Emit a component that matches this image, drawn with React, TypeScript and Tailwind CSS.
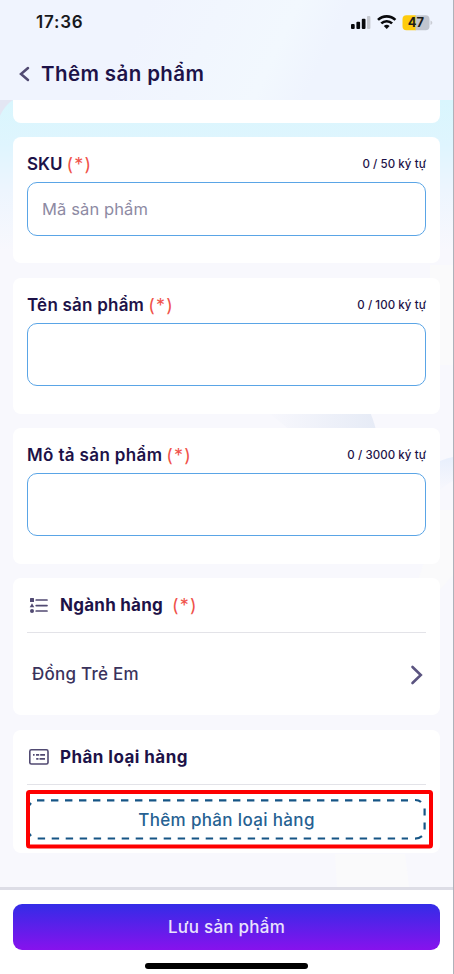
import React from 'react';

interface FieldCardProps {
  label: string;
  counter: string;
  placeholder?: string;
  cardClass: string;
  inputClass: string;
  labelClass?: string;
}

const Required = ({ className = '' }: { className?: string }) => (
  <span className={`text-[18px] leading-5 font-normal tracking-[1.2px] text-[#f0524a] ${className}`}>(*)</span>
);

const FieldCard: React.FC<FieldCardProps> = ({
  label,
  counter,
  placeholder,
  cardClass,
  inputClass,
  labelClass = '',
}) => (
  <section className={`rounded-lg bg-white px-3.5 pt-[18px] ${cardClass}`}>
    <div className="flex h-5 items-center justify-between whitespace-nowrap">
      <label className="flex items-center gap-1 text-[17px] font-semibold">
        <span className={labelClass}>{label}</span>
        <Required />
      </label>
      <span className="text-[11.5px] font-medium tracking-[0.07px]">{counter}</span>
    </div>
    <input
      placeholder={placeholder}
      className={`mt-[7px] block w-full rounded-[10px] border-[1.5px] border-[#5aa5e6] bg-white px-3.5 text-[16.5px] tracking-[0.12px] outline-none placeholder:text-[#8d8aa3] ${inputClass}`}
    />
  </section>
);

const StatusBar = () => (
  <div className="flex h-[45px] items-center justify-between pr-5 pl-9">
    <span className="pt-px text-[17px] font-semibold tracking-[0.8px] text-[#17181c]">17:36</span>
    <svg width="83" height="18" viewBox="0 0 83 18">
      <g fill="#08090c">
        <rect x="1" y="10" width="3.7" height="5" rx="1" />
        <rect x="6.4" y="7.8" width="3.7" height="7.2" rx="1" />
        <rect x="11.8" y="4.8" width="3.7" height="10.2" rx="1" />
        <rect x="17" y="2" width="3.4" height="13" rx="1" fill="#c5c8cf" />
      </g>
      <g fill="none" stroke="#08090c" strokeWidth="2.6">
        <path d="M28 5.9a12.4 12.4 0 0 1 17.4 0" />
        <path d="M31.3 9.4a7.7 7.7 0 0 1 10.8 0" />
      </g>
      <path d="M33.8 12.1a4.2 4.2 0 0 1 5.8 0l-2.9 2.9z" fill="#08090c" />
      <path d="M56.5 1.2H66v15h-9.5a4 4 0 0 1-4-4v-7a4 4 0 0 1 4-4z" fill="#fecb0c" />
      <path d="M65.5 1.2h10a4 4 0 0 1 4 4v7a4 4 0 0 1-4 4h-10z" fill="#c1c5cf" />
      <path d="M80.5 6.5c2.4.8 2.4 3.7 0 4.5z" fill="#c9ccd4" />
      <text x="66" y="13.2" textAnchor="middle" fontSize="13" fontWeight="700" fill="#1d1d1b">
        47
      </text>
    </svg>
  </div>
);

const ListIcon = () => (
  <svg width="19" height="17" viewBox="0 0 19 17" fill="#514a72">
    <rect x="1" y="1" width="4" height="4" rx="0.5" />
    <path d="M3 6.2l2.3 4H0.7z" />
    <circle cx="3" cy="14" r="2" />
    <path d="M7.2 3h10.8M7.2 8.6h10.8M7.2 14h10.8" stroke="#514a72" strokeWidth="1.7" strokeLinecap="round" />
  </svg>
);

const CardListIcon = () => (
  <svg width="20" height="16" viewBox="0 0 20 16" fill="none" stroke="#514a72">
    <rect x="0.8" y="0.8" width="18.2" height="14.2" rx="1.6" strokeWidth="1.6" />
    <path d="M4 5.8h1.6M7 5.8h3.2M11.2 5.8h4.8M4.2 9.8h.1M7.2 9.8h2.3M10.5 9.8H16" strokeWidth="1.8" />
  </svg>
);

const App: React.FC = () => {
  return (
    <div className="relative flex h-[974px] w-[454px] flex-col overflow-hidden border-r border-[#aeb2ba] bg-[#f8f8fd] font-['Inter',sans-serif] text-[#1d1248]">
      <header className="h-[100px] shrink-0 bg-[linear-gradient(115deg,#f0f4fe_30%,#f2f8fe_60%,#eff4fe_70%)] shadow-[0_1px_3px_rgba(60,60,90,0.12)]">
        <StatusBar />
        <div className="flex h-[58px] items-center pl-[19px]">
          <svg width="12" height="18" viewBox="0 0 12 18" fill="none" stroke="#514a72" strokeWidth="2.5" strokeLinecap="round">
            <path d="M9 3L2 9l7 6" />
          </svg>
          <h1 className="ml-2.5 text-[20.5px] font-semibold tracking-[0.4px] whitespace-nowrap">Thêm sản phẩm</h1>
        </div>
      </header>

      <main className="relative h-[787px] bg-[linear-gradient(180deg,#d9f6fd_0px,#dff5fe_45px,#edf5fe_90px,#f8f8fd_150px)] px-[13px]">
        {/* faint background shapes between the cards */}
        <svg className="absolute top-0 left-0" width="453" height="787" viewBox="0 0 453 787">
          <defs>
            <linearGradient id="blade" x1="0" x2="1">
              <stop offset="0" stopColor="#f8f8fd" />
              <stop offset="1" stopColor="#e6ebf6" />
            </linearGradient>
            <linearGradient id="edge" x1="0" x2="0" y1="0" y2="1">
              <stop offset="0" stopColor="#e8effc" />
              <stop offset="1" stopColor="#f8f8fd" />
            </linearGradient>
          </defs>
          <path d="M0 0h13C8 3 3 9 0 16z" fill="#e3e6f3" />
          <path d="M265 310h104q4 8 7 20H290z" fill="url(#blade)" />
          <path d="M440 361q7-3 13-4v24q-8 4-13 10z" fill="url(#edge)" />
          <path d="M430 165h23v100h-23z" fill="#fafafb" />
          <path d="M440 410h13v65q-15 18-33 32h-10z" fill="#fafafb" />
          <path d="M335 754h70l4 33h-72z" fill="#fafafb" />
        </svg>

        <div className="relative flex flex-col">
          <div className="h-[23px] rounded-b-lg bg-white" />
          <FieldCard
            label="SKU"
            counter="0 / 50 ký tự"
            placeholder="Mã sản phẩm"
            cardClass="mt-3.5 h-[126px]"
            inputClass="h-[54px]"
          />
          <FieldCard
            label="Tên sản phẩm"
            counter="0 / 100 ký tự"
            cardClass="mt-[15px] h-[136px]"
            inputClass="h-[63px]"
            labelClass="tracking-[0.22px]"
          />
          <FieldCard
            label="Mô tả sản phẩm"
            counter="0 / 3000 ký tự"
            cardClass="mt-3.5 h-[136px]"
            inputClass="h-[63px]"
            labelClass="tracking-[0.36px]"
          />

          <section className="mt-3.5 h-[137px] rounded-lg bg-white px-3.5">
            <div className="flex h-[55px] items-center border-b border-[#e3e3e8] pl-[2px] text-[17px] font-bold whitespace-nowrap">
              <ListIcon />
              <h2 className="ml-3 pt-[2px] tracking-[0.25px]">Ngành hàng</h2>
              <Required className="ml-[9px] pt-[2px]" />
            </div>
            <div className="flex h-[83px] items-center justify-between pr-[3px] pl-[5px]">
              <span className="pt-px text-[17px] font-medium tracking-[0.25px] text-[#3a325c]">Đồng Trẻ Em</span>
              <svg width="13" height="20" viewBox="0 0 13 20" fill="none" stroke="#5b5480" strokeWidth="2.6" strokeLinecap="round">
                <path d="M2.5 2l8.3 8-8.3 8" />
              </svg>
            </div>
          </section>

          <section className="relative mt-[15px] h-[123px] rounded-lg bg-white px-3.5">
            <div className="flex h-[55px] items-center border-b border-[#e3e3e8] pl-[2px] text-[17px] font-bold whitespace-nowrap">
              <CardListIcon />
              <h2 className="ml-[11px] pt-px tracking-[0.45px]">Phân loại hàng</h2>
            </div>
            <button className="mt-[15px] flex h-10 w-full items-center justify-center pt-px text-[17px] font-medium tracking-[0.35px] text-[#266192]">
              Thêm phân loại hàng
            </button>
            <svg className="absolute top-[60px] left-[13px]" width="407" height="59" viewBox="0 0 407 59" fill="none">
              <g stroke="#165585" strokeWidth="2.2">
                <path d="M11 10.3H382M11.7 48.5H382" strokeDasharray="7.4 6.6" />
                <path d="M389 10q4 0 6 2M389 48.6q4 0 7-2.5" />
                <path d="M398.6 18.5v7M398.6 32.5v7" />
                <path d="M3 15.5l2-2.5M3 43.5l2 2.5" />
              </g>
              <rect x="2" y="2" width="403" height="54.5" rx="1.5" stroke="#fe0000" strokeWidth="4" />
            </svg>
          </section>
        </div>
      </main>

      <footer className="flex h-[87px] flex-col items-center border-t-[3px] border-[#dddde6] bg-white px-[13px] pt-3.5">
        <button className="h-[46px] w-full rounded-[9px] bg-[linear-gradient(180deg,#332ce7,#8712ed)] pt-px text-[17px] font-medium tracking-[0.25px] text-[#e9e3fd]">
          Lưu sản phẩm
        </button>
        <div className="mt-[13px] h-[6px] w-[163px] rounded-full bg-black" />
      </footer>
    </div>
  );
};

export default App;
